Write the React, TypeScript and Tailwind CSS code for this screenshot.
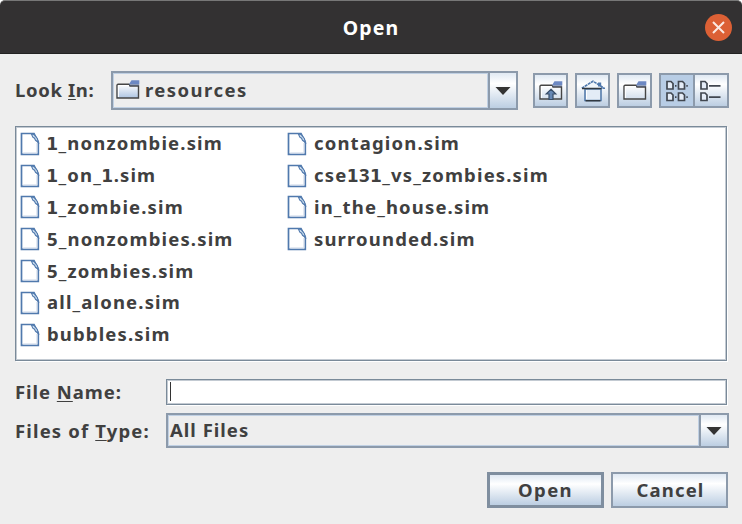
import React from "react";

const edge = "border-[#8c9aab]";
const metal = "bg-gradient-to-b from-[#e0e9f3] via-[#ffffff] via-30% to-[#bccee2]";
const field = "border border-[#7a8a99] bg-white shadow-[inset_1px_1px_0_#c3cad2,inset_-1px_-1px_0_#c3cad2,1px_1px_0_#fff]";

function FileIcon() {
  return (
    <svg width="20" height="24" viewBox="0 0 20 24" className="shrink-0">
      <path d="M1.5 1.5H14L18.3 10V22.3H1.5Z" fill="#fff" stroke="#5079ad" strokeWidth="1.7" />
      <path d="M3.2 20.8H16.8V11" fill="none" stroke="#dce4ef" strokeWidth="1.2" />
      <path d="M11.3 1.8L12.8 5.2L14.5 6.2L15.5 8.3L18.5 10.5L17.3 6.5L14 2.5Z" fill="#c9daeb" stroke="#5079ad" strokeWidth="1.1" />
    </svg>
  );
}

function Folder({ tone = "strong", children }: { tone?: "strong" | "light"; children?: React.ReactNode }) {
  const id = `folder-${tone}`;
  return (
    <svg width="24" height="20" viewBox="0 0 24 20" className="shrink-0">
      <defs>
        <linearGradient id={id} x2="0" y2="1">
          <stop stopColor="#fff" />
          <stop offset="1" stopColor={tone === "strong" ? "#adc4e2" : "#d3dfed"} />
        </linearGradient>
      </defs>
      <path d="M1 18V5L2 4.2H13L14 6H22.5V18Z" fill={`url(#${id})`} stroke="#454545" strokeWidth="1.4" />
      <path d="M2.4 17V5.6H13" fill="none" stroke="#fff" />
      <path d="M13.3 3.8L15.5 .3H23.3V4.5H13.3Z" fill="#6c88c3" />
      <path d="M13.5 5.2H23" stroke="#4b5873" strokeWidth="1" />
      {children}
    </svg>
  );
}

function Home() {
  return (
    <svg width="24" height="22" viewBox="0 0 24 22">
      <path d="M4 9H20V20.5H4Z" fill="#e3ecf6" stroke="#5d82b0" strokeWidth="1.7" />
      <path d="M5.5 19V10" stroke="#fff" />
      <path d="M1 8.2L12 1.2L23 8.2Z" fill="#f1f6fb" />
      <path d="M.8 8.2L12 1.2L23.2 8.2H20" fill="none" stroke="#5079ad" strokeWidth="1.6" strokeDasharray="3 .6" />
      <path d="M17 2.5H20.2V6.5H17Z" fill="#5079ad" />
      <path d="M1 8.6H20.5M4.5 20.8H19.5" stroke="#303840" strokeWidth="1.5" />
    </svg>
  );
}

function Tiles({ list = false }: { list?: boolean }) {
  return (
    <svg width="24" height="22" viewBox="0 0 24 22" fill="#e5edf8" stroke="#414750" strokeWidth="1.7">
      <path d="M2 1.5H6L8 3.5V9H2ZM2 13H6L8 15V20.5H2Z" />
      {list ? (
        <path d="M10 5.8H21.5M10 17.2H21.5" />
      ) : (
        <>
          <path d="M13.5 1.5H17.5L19.5 3.5V9H13.5ZM13.5 13H17.5L19.5 15V20.5H13.5Z" />
          <path d="M10 5.8H11.5M21.3 5.8H22.8M10 17.2H11.5M21.3 17.2H22.8" />
        </>
      )}
    </svg>
  );
}

function DownArrow() {
  return (
    <svg width="16" height="8" viewBox="0 0 16 8">
      <path d="M.5 0H15.5L8 8Z" fill="#333" />
    </svg>
  );
}

function ToolButton({ children }: { children: React.ReactNode }) {
  return <div className={`flex h-[35px] w-[35px] items-center justify-center border-2 ${edge} ${metal}`}>{children}</div>;
}

function FileRow({ name }: { name: string }) {
  return (
    <div className="flex h-[31.8px] items-center">
      <FileIcon />
      <span className="-mt-px ml-[7px] whitespace-nowrap">
        {name.split(/(1)/).map((part, i) =>
          part === "1" ? (
            <span key={i} className="mx-[-0.7px] font-['DejaVu_Sans'] text-[17px] leading-none">1</span>
          ) : (
            part
          ),
        )}
      </span>
    </div>
  );
}

const left = ["1_nonzombie.sim", "1_on_1.sim", "1_zombie.sim", "5_nonzombies.sim", "5_zombies.sim", "all_alone.sim", "bubbles.sim"];
const right = ["contagion.sim", "cse131_vs_zombies.sim", "in_the_house.sim", "surrounded.sim"];
const mnemonic = "decoration-1 underline-offset-2";

export default function App() {
  return (
    <div className="h-[524px] w-[742px] overflow-hidden bg-[#eeeeee] font-['Noto_Sans',sans-serif] text-[18.5px] leading-6 font-bold tracking-[1.15px] text-[#404040]">
      <div className="bg-white">
        <header className="grid h-[54px] grid-cols-[1fr_auto_1fr] items-center rounded-t-[5px] border-t border-b border-t-[#777] border-b-[#222] bg-[#333132] pr-2.5 text-white">
          <span />
          <span className="pt-px pl-2.5 text-[19.5px] tracking-[1.1px]">Open</span>
          <div className="flex h-[27px] w-[27px] items-center justify-center justify-self-end rounded-full bg-[#dc6035]">
            <svg width="13" height="13" viewBox="0 0 13 13" stroke="#fbe9e2" strokeWidth="2"><path d="M1 1L12 12M12 1L1 12" /></svg>
          </div>
        </header>
      </div>
      <div className="mt-[17px] flex h-[39px] items-center pl-[15px]">
        <span className="w-24 pb-0.5 tracking-[0.65px]">Look <u className={mnemonic}>I</u>n:</span>
        <div className={`flex h-[39px] w-[407px] border-2 ${edge}`}>
          <div className="flex flex-1 items-center border border-[#c0d0e3] pb-0.5 pl-0.5">
            <Folder /><span className="ml-[5px] tracking-[1.45px]">resources</span>
          </div>
          <div className={`flex w-[28px] items-center justify-center border-l-2 ${edge} ${metal}`}><DownArrow /></div>
        </div>
        <div className="ml-[15px] flex gap-[7px]">
          <ToolButton><Folder tone="light"><path d="M12 8.3L16.8 13H14V18.5H10V13H7.2Z" fill="#6688b5" stroke="#384d68" strokeWidth="1.2" /></Folder></ToolButton>
          <ToolButton><Home /></ToolButton>
          <ToolButton><Folder tone="light" /></ToolButton>
          <div className={`flex h-[35px] w-[70px] border-2 ${edge}`}>
            <div className={`flex w-[34px] items-center justify-center border-r-2 bg-[#b8cde5] ${edge}`}><Tiles /></div>
            <div className={`flex flex-1 items-center justify-center ${metal}`}><Tiles list /></div>
          </div>
        </div>
      </div>
      <div className={`mt-4 ml-[15px] flex h-[235px] w-[712px] pt-px pl-1 ${field}`}>
        <div className="w-[267px]">{left.map((n) => <FileRow key={n} name={n} />)}</div>
        <div>{right.map((n) => <FileRow key={n} name={n} />)}</div>
      </div>
      <div className="mt-[18px] flex h-[26px] items-center pl-[15px]">
        <span className="w-[151px] tracking-[0.95px]">File <u className={mnemonic}>N</u>ame:</span>
        <div className={`h-[26px] w-[561px] p-[3px] pt-0.5 ${field}`}><div className="h-full w-px bg-[#333]" /></div>
      </div>
      <div className="mt-[8px] flex h-[35px] items-center pl-[15px]">
        <span className="w-[151px] whitespace-nowrap">Files of <u className={mnemonic}>T</u>ype:</span>
        <div className={`flex h-[35px] w-[563px] border-2 ${edge}`}>
          <div className="flex-1 border border-[#c0d0e3] pt-0.5 pl-px tracking-[1px]">All Files</div>
          <div className={`flex w-[28px] items-center justify-center border-l-2 ${edge} ${metal}`}><DownArrow /></div>
        </div>
      </div>
      <div className="mt-[24px] flex gap-[7px] pl-[487px]">
        <div className={`flex h-9 w-[117px] items-center justify-center border-[3px] border-[#7f8e9f] tracking-[1.4px] ${metal}`}>Open</div>
        <div className={`flex h-9 w-[117px] items-center justify-center border-2 pl-0.5 ${edge} ${metal}`}>Cancel</div>
      </div>
    </div>
  );
}
